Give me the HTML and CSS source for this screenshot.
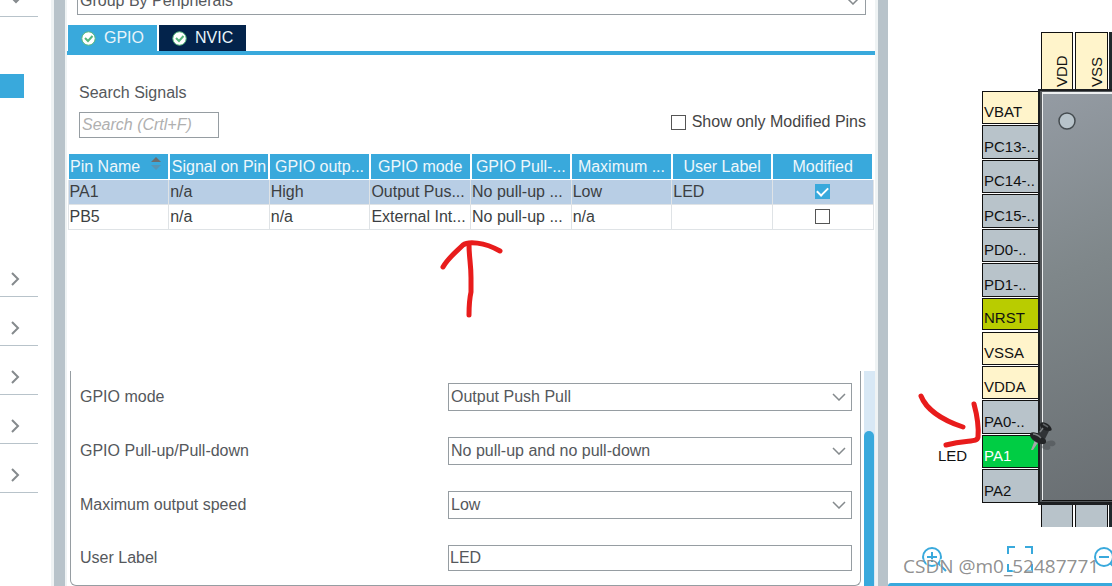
FILE: index.html
```
<!DOCTYPE html>
<html lang="en">
<head>
    <meta charset="UTF-8">
    <meta name="viewport" content="width=device-width, initial-scale=1.0">
    <title>GPIO Configuration</title>
    <link rel="stylesheet" href="styles.css">
</head>
<body>
    <div class="layout">
        <nav class="sidebar">
            <div class="sidebar-top">
                <svg class="sidebar-mark" width="12" height="8" viewBox="0 0 12 8"><path d="M1 -3 L6 2 L11 -3" /></svg>
            </div>
            <div class="sidebar-view"></div>
            <button class="category" aria-label="Category 1"><svg width="10" height="14" viewBox="0 0 10 14"><path d="M2 1 L8 7 L2 13" /></svg></button>
            <button class="category" aria-label="Category 2"><svg width="10" height="14" viewBox="0 0 10 14"><path d="M2 1 L8 7 L2 13" /></svg></button>
            <button class="category" aria-label="Category 3"><svg width="10" height="14" viewBox="0 0 10 14"><path d="M2 1 L8 7 L2 13" /></svg></button>
            <button class="category" aria-label="Category 4"><svg width="10" height="14" viewBox="0 0 10 14"><path d="M2 1 L8 7 L2 13" /></svg></button>
            <button class="category" aria-label="Category 5"><svg width="10" height="14" viewBox="0 0 10 14"><path d="M2 1 L8 7 L2 13" /></svg></button>
        </nav>

        <div class="splitter"></div>

        <main class="config">
            <div class="select group-select">
                <select aria-label="Group by">
                    <option>Group By Peripherals</option>
                </select>
                <svg class="arrow" width="14" height="8" viewBox="0 0 14 8"><path d="M1 1 L7 7 L13 1" /></svg>
            </div>

            <div class="tabs">
                <button class="tab">
                    <svg width="15" height="15" viewBox="0 0 15 15"><circle cx="7.5" cy="7.5" r="6.7" /><path d="M4 7 L7 10 L11.500 5" /></svg>
                    GPIO
                </button>
                <button class="tab tab-dark">
                    <svg width="15" height="15" viewBox="0 0 15 15"><circle cx="7.5" cy="7.5" r="6.7" /><path d="M4 7 L7 10 L11.500 5" /></svg>
                    NVIC
                </button>
            </div>

            <div class="filters">
                <div class="search">
                    <label for="search">Search Signals</label>
                    <input type="text" id="search" placeholder="Search (Crtl+F)">
                </div>
                <label class="only-modified"><input type="checkbox" class="check"> Show only Modified Pins</label>
            </div>

            <div class="pins">
                <table class="pin-table">
                    <thead>
                        <tr>
                            <th class="sorted"><div>Pin Name <svg width="10" height="13" viewBox="0 0 10 13"><path class="up" d="M0 5 L5 0 L10 5 Z" /><path class="down" d="M0 8 L5 13 L10 8 Z" /></svg></div></th>
                            <th>Signal on Pin</th>
                            <th>GPIO outp...</th>
                            <th>GPIO mode</th>
                            <th>GPIO Pull-...</th>
                            <th>Maximum ...</th>
                            <th>User Label</th>
                            <th>Modified</th>
                        </tr>
                    </thead>
                    <tbody>
                        <tr class="selected">
                            <td>PA1</td>
                            <td>n/a</td>
                            <td>High</td>
                            <td>Output Pus...</td>
                            <td>No pull-up ...</td>
                            <td>Low</td>
                            <td>LED</td>
                            <td class="mod"><input type="checkbox" class="check" aria-label="PA1 modified" checked></td>
                        </tr>
                        <tr>
                            <td>PB5</td>
                            <td>n/a</td>
                            <td>n/a</td>
                            <td>External Int...</td>
                            <td>No pull-up ...</td>
                            <td>n/a</td>
                            <td></td>
                            <td class="mod"><input type="checkbox" class="check" aria-label="PB5 modified"></td>
                        </tr>
                    </tbody>
                </table>
            </div>

            <div class="details">
                <form class="pin-form">
                    <div class="field">
                        <label for="mode">GPIO mode</label>
                        <div class="select">
                            <select id="mode"><option>Output Push Pull</option></select>
                            <svg class="arrow" width="14" height="8" viewBox="0 0 14 8"><path d="M1 1 L7 7 L13 1" /></svg>
                        </div>
                    </div>
                    <div class="field">
                        <label for="pull">GPIO Pull-up/Pull-down</label>
                        <div class="select">
                            <select id="pull"><option>No pull-up and no pull-down</option></select>
                            <svg class="arrow" width="14" height="8" viewBox="0 0 14 8"><path d="M1 1 L7 7 L13 1" /></svg>
                        </div>
                    </div>
                    <div class="field">
                        <label for="speed">Maximum output speed</label>
                        <div class="select">
                            <select id="speed"><option>Low</option></select>
                            <svg class="arrow" width="14" height="8" viewBox="0 0 14 8"><path d="M1 1 L7 7 L13 1" /></svg>
                        </div>
                    </div>
                    <div class="field">
                        <label for="user-label">User Label</label>
                        <input type="text" id="user-label" value="LED">
                    </div>
                </form>
                <div class="scrollbar"><div class="thumb"></div></div>
            </div>
        </main>

        <div class="splitter"></div>

        <section class="pinout">
            <svg class="chip" width="224" height="527" viewBox="888 0 224 527">
                <defs>
                    <linearGradient id="body" gradientUnits="userSpaceOnUse" x1="1043" y1="94" x2="1200" y2="500">
                        <stop offset="0" stop-color="#949ba3" />
                        <stop offset="0.4" stop-color="#7f878a" />
                        <stop offset="1" stop-color="#666b6f" />
                    </linearGradient>
                </defs>

                <!-- top and bottom pins -->
                <g class="pin power">
                    <rect x="1041.500" y="32.500" width="31" height="58" />
                    <rect x="1075.500" y="32.500" width="32" height="58" />
                </g>
                <rect class="edge" x="1109" y="32" width="3" height="58" />
                <g class="pin io">
                    <rect x="1041.500" y="500.500" width="31" height="40" />
                    <rect x="1075.500" y="500.500" width="32" height="40" />
                </g>
                <rect class="edge" x="1109" y="502" width="3" height="26" />
                <text transform="translate(1067 87) rotate(-90)">VDD</text>
                <text transform="translate(1102 87) rotate(-90)">VSS</text>

                <!-- left pins -->
                <g class="pin power">
                    <rect x="982.500" y="91.500" width="57" height="32" />
                    <rect x="982.500" y="332.500" width="57" height="32" />
                    <rect x="982.500" y="366.500" width="57" height="32" />
                </g>
                <g class="pin io">
                    <rect x="982.500" y="125.500" width="57" height="33" />
                    <rect x="982.500" y="160.500" width="57" height="32" />
                    <rect x="982.500" y="194.500" width="57" height="33" />
                    <rect x="982.500" y="229.500" width="57" height="32" />
                    <rect x="982.500" y="263.500" width="57" height="33" />
                    <rect x="982.500" y="400.500" width="57" height="33" />
                    <rect x="982.500" y="469.500" width="57" height="33" />
                </g>
                <g class="pin reset"><rect x="982.500" y="298.500" width="57" height="31" /></g>
                <g class="pin active"><rect x="982.500" y="435.500" width="57" height="32" /></g>
                <text x="984" y="117">VBAT</text>
                <text x="984" y="152">PC13-..</text>
                <text x="984" y="186">PC14-..</text>
                <text x="984" y="221">PC15-..</text>
                <text x="984" y="255">PD0-..</text>
                <text x="984" y="290">PD1-..</text>
                <text x="984" y="323">NRST</text>
                <text x="984" y="358">VSSA</text>
                <text x="984" y="392">VDDA</text>
                <text x="984" y="427">PA0-..</text>
                <text class="light" x="984" y="461">PA1</text>
                <text x="984" y="496">PA2</text>
                <text x="938" y="461">LED</text>

                <!-- package -->
                <rect x="1038" y="89" width="80" height="416" fill="#1c1e20" />
                <rect x="1040" y="91" width="80" height="411" fill="#54585b" />
                <rect x="1042" y="92" width="80" height="408" fill="#eef0f1" />
                <rect x="1043" y="94" width="80" height="406" fill="url(#body)" />
                <path d="M1042 500.500 H1112" stroke="#111" />
                <circle cx="1067" cy="121" r="8" fill="#b7c3ca" stroke="#454c50" stroke-width="1.500" />

                <!-- push pin -->
                <path d="M1041 447 C1045 451 1052 451 1050 446 C1053 447 1057 445 1055 442 C1052 439 1047 441 1045 443 Z" fill="#3c4144" opacity="0.4" />
                <path d="M1035 440 L1031 450 L1033 450 L1039 441 Z" fill="#a5a8aa" />
                <path d="M1030 435 C1030 431 1036 432 1041 435 C1046 438 1048 443 1044 444 C1040 445 1030 440 1030 435 Z" fill="#222426" />
                <path d="M1037 434 L1042 427 L1049 431 L1045 439 Z" fill="#303336" />
                <path d="M1040 425 C1040 421 1045 422 1049 425 C1052 428 1053 431 1049 431 C1045 431 1040 428 1040 425 Z" fill="#202224" />
                <path d="M1033 434 C1036 434 1039 436 1041 438 M1040 432 L1043 428" fill="none" stroke="#7a7e81" stroke-width="1.500" />
                <path d="M1043 424 L1048 427" stroke="#5c6063" stroke-width="1.500" />
            </svg>

            <div class="tools">
                <button aria-label="Zoom in"><svg width="28" height="28" viewBox="0 0 28 28"><circle cx="12" cy="12" r="9" /><path d="M12 7 V17 M7 12 H17 M18 18 L26 26" /></svg></button>
                <button aria-label="Fit to window"><svg width="28" height="28" viewBox="0 0 28 28"><path d="M2 9 V2 H9 M19 2 H26 V9 M26 19 V26 H19 M9 26 H2 V19" /></svg></button>
                <button aria-label="Zoom out"><svg width="28" height="28" viewBox="0 0 28 28"><circle cx="12" cy="12" r="9" /><path d="M7 12 H17 M18 18 L26 26" /></svg></button>
            </div>
            <div class="bottom-line"></div>
            <div class="watermark">CSDN @m0_52487771</div>
        </section>
    </div>

    <!-- hand drawn marks -->
    <svg class="marks" width="1112" height="586" viewBox="0 0 1112 586">
        <path d="M443 267 C448 258 456 252 463 245 C468 241 484 242 500 251" />
        <path d="M469 244 C469 258 471 263 471 278 V292 C469 301 469 306 469 315" />
        <path d="M921 396 C926 409 942 420 963 427" />
        <path d="M974 404 C977 415 979 425 978 437 C977 443 968 439 946 445" />
    </svg>
</body>
</html>
```
FILE: styles.css
```
* {
    box-sizing: border-box;
}

body {
    margin: 0;
    font-family: "Liberation Sans", Arial, sans-serif;
    font-size: 16px;
    line-height: 20px;
    color: #55585c;
    background-color: #fff;
    overflow: hidden;
}

button, input, select {
    font: inherit;
    color: inherit;
    margin: 0;
}

button {
    border: none;
    background: none;
    padding: 0;
    cursor: pointer;
}

svg {
    display: block;
    flex: none;
}

.layout {
    display: grid;
    grid-template-columns: 54px 11px minmax(0, 1fr) 10px 224px;
    height: 100vh;
}

.splitter {
    background-color: #b8c3ca;
}

/* left categories */
.sidebar {
    border-right: 3px solid #eff3f4;
    padding-right: 13px;
}

.sidebar-top {
    height: 17px;
    border-bottom: 1px solid #b8c3ca;
    padding-left: 10px;
}

.sidebar-mark, .category svg, .arrow {
    fill: none;
    stroke: #858a8d;
    stroke-width: 2;
}

.sidebar-view {
    width: 24px;
    height: 24px;
    margin-top: 57px;
    margin-bottom: 150px;
    background-color: #39a9dc;
}

.category {
    display: flex;
    align-items: center;
    width: 100%;
    height: 49px;
    padding: 14px 0 0 10px;
    border-bottom: 1px solid #b8c3ca;
}

/* middle column */
.config {
    display: flex;
    flex-direction: column;
    border-left: 2px solid #eff3f4;
    border-right: 3px solid #eff3f4;
    overflow: hidden;
}

.select {
    position: relative;
}

.select select {
    display: block;
    width: 100%;
    height: 28px;
    padding: 0 24px 0 2px;
    appearance: none;
    border: 1px solid #969da2;
    border-radius: 0;
    background-color: #fff;
}

.arrow {
    position: absolute;
    right: 6px;
    top: 10px;
    stroke-width: 1.5;
    pointer-events: none;
}

.group-select {
    margin: -13px 9px 10px 10px;
}

.tabs {
    display: flex;
    gap: 2px;
    padding-left: 1px;
    border-bottom: 4px solid #39a9dc;
}

.tab {
    display: flex;
    align-items: center;
    gap: 8px;
    height: 26px;
    padding: 0 13px;
    background-color: #39a9dc;
    color: #e8f4fa;
}

.tab-dark {
    background-color: #03234b;
}

.tab circle {
    fill: #fff;
    stroke: #56b77c;
    stroke-width: 1;
}

.tab path {
    fill: none;
    stroke: #56b77c;
    stroke-width: 2;
}

.filters {
    display: flex;
    justify-content: space-between;
    align-items: flex-end;
    padding: 28px 9px 16px 12px;
}

.search {
    display: flex;
    flex-direction: column;
    gap: 9px;
}

.search input {
    width: 140px;
    height: 26px;
    padding: 0 2px;
    border: 1px solid #969da2;
}

.search input::placeholder {
    color: #b0b0b0;
    font-style: italic;
    opacity: 1;
}

.only-modified {
    display: flex;
    align-items: center;
    gap: 6px;
    color: #444;
    padding-bottom: 6px;
}

.check {
    appearance: none;
    display: block;
    width: 15px;
    height: 15px;
    border: 1px solid #555;
    background-color: #fff;
}

.check:checked {
    border-color: #39a9dc;
    background-color: #39a9dc;
}

.check:checked::after {
    content: "";
    display: block;
    width: 5px;
    height: 9px;
    margin: 0 auto;
    border: solid #fff;
    border-width: 0 2px 2px 0;
    transform: rotate(45deg);
}

/* table with pins */
.pins {
    flex: 1;
    min-height: 217px;
    padding-right: 1px;
}

.pin-table {
    width: 100%;
    table-layout: fixed;
    border-collapse: collapse;
    color: #3c3f42;
}

.pin-table th, .pin-table td {
    height: 25px;
    padding: 0 1px;
    overflow: hidden;
    white-space: nowrap;
}

.pin-table th {
    padding-top: 2px;
    background-color: #39a9dc;
    color: #eef7fb;
    font-weight: normal;
    border: 1px solid #fff;
    border-width: 0 2px 1px;
}

.pin-table td {
    border: 1px solid #dfe3e6;
    border-top: none;
}

.sorted div {
    display: flex;
    justify-content: space-between;
    padding-right: 6px;
}

.sorted .up {
    fill: #6d6d6d;
}

.sorted .down {
    fill: #5794b3;
}

.selected {
    background-color: #b8cee5;
}

.mod .check {
    margin: 0 auto;
}

/* pin settings */
.details {
    display: flex;
    gap: 3px;
    height: 215px;
    padding-left: 3px;
}

.pin-form {
    flex: 1;
    display: flex;
    flex-direction: column;
    gap: 26px;
    padding: 12px 8px 0 9px;
    border: 1px solid #969da2;
    border-top: none;
    border-radius: 0 0 6px 6px;
}

.field {
    display: grid;
    grid-template-columns: 368px 1fr;
    align-items: center;
}

.field > input {
    width: 100%;
    height: 26px;
    padding: 0 1px;
    border: 1px solid #969da2;
}

.scrollbar {
    width: 11px;
    padding-top: 60px;
    background-color: #d8e8f5;
}

.thumb {
    width: 10px;
    height: 100%;
    border-radius: 5px 5px 0 0;
    background-color: #39a9dc;
}

/* chip */
.pinout {
    position: relative;
    display: flex;
    flex-direction: column;
    overflow: hidden;
}

.chip text {
    font-size: 15px;
    fill: #111;
}

.chip .light {
    fill: #fff;
}

.pin {
    stroke: #111;
}

.power {
    fill: #fff4cb;
}

.io {
    fill: #b8c3ca;
}

.reset {
    fill: #b9cc00;
}

.active {
    fill: #00cd44;
}

.edge {
    fill: #222a2d;
}

.tools {
    display: flex;
    gap: 58px;
    padding: 18px 0 0 32px;
}

.tools svg {
    fill: none;
    stroke: #39a9dc;
    stroke-width: 2;
}

.bottom-line {
    height: 3px;
    margin-top: auto;
    border-top-left-radius: 3px;
    background-color: #39a9dc;
}

.watermark {
    position: absolute;
    left: 15px;
    bottom: 8px;
    font-family: "Open Sans", "Noto Sans", sans-serif;
    font-size: 19px;
    line-height: 24px;
    color: rgba(130, 130, 130, 0.9);
    text-shadow: -1px -1px 0 rgba(255, 255, 255, 0.8);
    white-space: nowrap;
}

.marks {
    position: absolute;
    left: 0;
    top: 0;
    fill: none;
    stroke: #e81c1c;
    stroke-width: 5;
    stroke-linecap: round;
    stroke-linejoin: round;
    pointer-events: none;
}
```
